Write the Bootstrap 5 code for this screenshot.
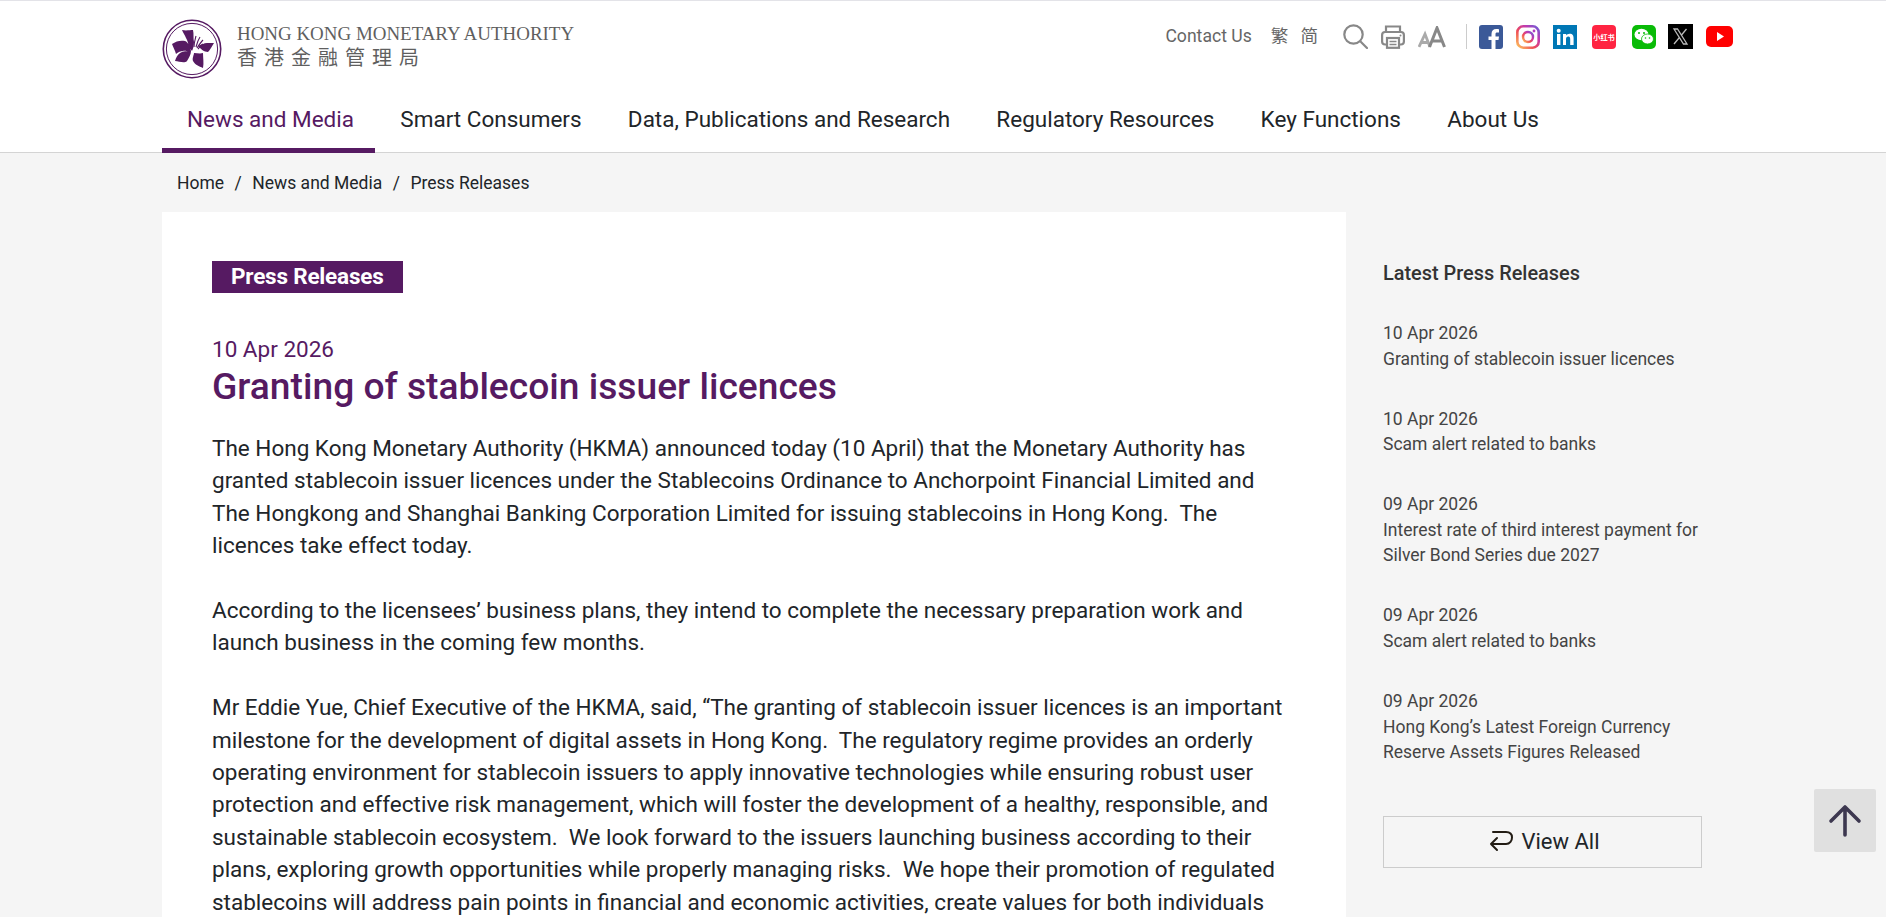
<!DOCTYPE html>
<html lang="en">
<head>
<meta charset="utf-8">
<title>Granting of stablecoin issuer licences</title>
<link href="https://cdn.jsdelivr.net/npm/bootstrap@5.3.0/dist/css/bootstrap.min.css" rel="stylesheet">
<style>
html,body{height:100%;overflow:hidden}
body{font-family:Roboto,"Noto Sans CJK TC",sans-serif;background:#f5f5f5;color:#212529}
.hk-header{background:#fff;border-top:1px solid #e3e3e8;border-bottom:1px solid #d4d4d4;height:153px}
.hk-wrap{width:1571px;margin-left:162px}
.hk-top{height:88px}
.hk-logo{margin-top:18px}
.hk-logotext{margin-left:15px;color:#5f5f5f}
.hk-en{font-family:"Liberation Serif",serif;font-size:18.95px;line-height:20px;white-space:nowrap;margin-top:23px}
.hk-zh{font-family:"Noto Sans CJK TC",serif;font-size:20px;line-height:24px;letter-spacing:7px;margin-top:1px}
.hk-tools{margin-top:23px;color:#666;font-size:17.6px;height:25px}
.hk-tools span{line-height:25px}
.hk-sep{width:1px;height:25px;background:#ccc;margin-left:20px}
.hk-g12{margin-left:12px}
.hk-g13{margin-left:13px}
.hk-g15{margin-left:15px}
.hk-g16{margin-left:16px}
.hk-g19{margin-left:19px}
.hk-g25{margin-left:25px}
.hk-navlink{display:block;font-size:22.5px;line-height:30px;color:#212529;text-decoration:none;padding:15px 21.3px 15px 25px;height:64px;white-space:nowrap}
.hk-navlink.hk-on{color:#561a62;border-bottom:5px solid #561a62}
.hk-crumb{height:59px;padding-left:15px;font-size:17.5px;line-height:60px;color:#212529}
.hk-crumb i{font-style:normal;margin:0 10.5px}
.hk-main{width:1184px;background:#fff;padding:49px 50px 0;flex:none}
.hk-tag{display:inline-block;background:#561a62;color:#fff;font-size:22.5px;font-weight:700;line-height:30px;height:32px;padding:0 19px;letter-spacing:-.2px}
.hk-date{font-size:22.5px;line-height:28px;color:#561a62;margin-top:42px}
.hk-title{font-size:37.2px;line-height:46px;font-weight:500;color:#561a62;margin:0 0 23px}
.hk-body{font-size:22.5px;line-height:32.4px;color:#212529;margin-bottom:32.4px;width:1078px}
.hk-side{margin-left:37px;width:319px;flex:none;color:#444;font-size:17.5px;line-height:25.5px}
.hk-sidetitle{font-size:19.9px;font-weight:500;color:#333;line-height:28px;margin:48.2px 0 0}
.hk-item{margin-top:34.6px}
.hk-sidetitle + .hk-item{margin-top:33px}
.hk-viewall{height:52px;border:1px solid #ccc;border-radius:0;margin-top:50px;padding-left:16px;font-size:22px;color:#212529;background:transparent}
.hk-up{position:fixed;left:1814px;top:789px;width:62px;height:63px;background:#e0e0e0;border-radius:2px}
</style>
</head>
<body>
<header class="hk-header">
  <div class="hk-wrap">
    <div class="d-flex justify-content-between hk-top">
      <div class="d-flex">
        <svg class="hk-logo" width="60" height="60" viewBox="0 0 60 60">
          <circle cx="30" cy="30" r="28.7" fill="none" stroke="#561a62" stroke-width="1.6"/>
          <circle cx="30" cy="30" r="25.6" fill="none" stroke="#561a62" stroke-width="1"/>
          <path fill="#561a62" d="M20 11c4 1 8 0 11 0 1 4 0 8 1 12 0 4-1 7-2 9-4-5-4-10-6-13-1-3-3-5-4-8zM10 25c4-3 9-4 13-3 3 1 5 6 6 10-3 1-6-1-8 0-2 0-5 1-7 3-1-4-3-7-4-10zM13 42c1-3 2-6 5-8 3-2 7-2 11-2 0 3-2 7-4 10-3 3-8 0-12 0zM32 34c3 0 6 1 9 0 0 5 1 10 0 15-4-2-8-3-10-7-1-3 1-6 1-8zM36 27c3-1 6-3 9-3l7 0c-2 3-4 7-6 9-4 0-7-3-10-6z"/>
          <path fill="none" stroke="#561a62" stroke-width="1.100" d="M32 28c0-4 1-7 2-11M34 28c1-4 2-7 4-10M35 29c2-3 4-6 6-8M36 30c2-2 3-4 5-5"/>
        </svg>
        <div class="hk-logotext">
          <div class="hk-en">HONG KONG MONETARY AUTHORITY</div>
          <div class="hk-zh">香港金融管理局</div>
        </div>
      </div>
      <div class="d-flex align-items-center hk-tools">
        <span>Contact Us</span>
        <span class="hk-g19">繁</span>
        <span class="hk-g12">简</span>
        <svg class="hk-g25" width="25" height="25" viewBox="0 0 25 25" fill="none" stroke="#888" stroke-width="2.2"><circle cx="10.500" cy="10.500" r="9.200"/><path d="M17.500 17.500l6.500 6.500" stroke-linecap="round"/></svg>
        <svg class="hk-g13" width="24" height="24" viewBox="0 0 24 24" fill="none" stroke="#888" stroke-width="2.200"><path d="M5 7V1.500h14V7"/><rect x="1.100" y="7" width="21.800" height="12.500" rx="3"/><rect x="6" y="13" width="12" height="9.800" fill="#fff"/><path d="M8.500 16.500h7M8.500 19.500h7" stroke-width="1.500"/><circle cx="19.500" cy="10.500" r="1" fill="#888" stroke="none"/></svg>
        <svg class="hk-g13" width="28" height="22" viewBox="0 0 28 22" fill="none"><path d="M1 21L7 8l5 13M3 16.500h7.500" stroke="#aaa" stroke-width="2.800"/><path d="M11.500 21L19 2l7.500 19M14.500 15h9" stroke="#888" stroke-width="3"/></svg>
        <div class="hk-sep"></div>
        <svg class="hk-g12" width="24" height="24" viewBox="0 0 24 24"><rect width="24" height="24" rx="3" fill="#3b5998"/><path fill="#fff" d="M16.500 24v-9h3l.5-3.600h-3.500V9.200c0-1 .3-1.700 1.800-1.700H20V4.300c-.4-.1-1.500-.2-2.800-.2-2.800 0-4.700 1.700-4.700 4.800v2.500H9.500V15h3v9z"/></svg>
        <svg class="hk-g13" width="24" height="24" viewBox="0 0 24 24" fill="none"><defs><linearGradient id="ig" x1="0" y1="1" x2="1" y2="0"><stop offset="0" stop-color="#fdc35c"/><stop offset=".4" stop-color="#ee4a5a"/><stop offset=".7" stop-color="#c13ab0"/><stop offset="1" stop-color="#6a5fd8"/></linearGradient></defs><rect x="1.300" y="1.300" width="21.400" height="21.400" rx="6" stroke="url(#ig)" stroke-width="2.600"/><circle cx="12" cy="12" r="5" stroke="url(#ig)" stroke-width="2.400"/><circle cx="18" cy="6" r="1.400" fill="#b13ac0"/></svg>
        <svg class="hk-g13" width="24" height="24" viewBox="0 0 24 24"><rect width="24" height="24" fill="#0077b5"/><rect x="4" y="9" width="3.400" height="11" fill="#fff"/><circle cx="5.700" cy="5.700" r="2" fill="#fff"/><path fill="#fff" d="M10 9h3.200v1.500c.6-1 1.800-1.800 3.500-1.800 3 0 3.900 2 3.900 4.800V20h-3.400v-5.800c0-1.500-.4-2.700-1.900-2.700s-2.300 1.100-2.300 2.700V20H10z"/></svg>
        <svg class="hk-g15" width="24" height="24" viewBox="0 0 24 24"><rect width="24" height="24" rx="4" fill="#ff2442"/><text x="12" y="15" text-anchor="middle" font-size="7.200" font-weight="700" fill="#fff" font-family="'Noto Sans CJK SC',sans-serif">小红书</text></svg>
        <svg class="hk-g16" width="24" height="24" viewBox="0 0 24 24"><rect width="24" height="24" rx="5" fill="#09bb07"/><ellipse cx="9.500" cy="9.500" rx="7" ry="5.800" fill="#fff"/><ellipse cx="15.500" cy="14" rx="6" ry="5" fill="#fff" stroke="#09bb07" stroke-width=".8"/><circle cx="7" cy="8" r="1" fill="#09bb07"/><circle cx="12" cy="8" r="1" fill="#09bb07"/><circle cx="13.500" cy="13" r=".8" fill="#09bb07"/><circle cx="17.500" cy="13" r=".8" fill="#09bb07"/></svg>
        <svg class="hk-g12" width="25" height="25" viewBox="0 0 25 25"><rect width="25" height="25" fill="#000"/><path fill="none" stroke="#bbb" stroke-width="1.300" d="M6 5h3.500l9.500 15h-3.500zM18.500 5L13.500 11M11 14l-5 6"/></svg>
        <svg class="hk-g13" width="27" height="21" viewBox="0 0 27 21"><rect width="27" height="21" rx="5" fill="#f00"/><path fill="#fff" d="M11 6l7 4.500-7 4.500z"/></svg>
      </div>
    </div>
    <nav class="d-flex">
      <a class="hk-navlink hk-on" href="#">News and Media</a>
      <a class="hk-navlink" href="#">Smart Consumers</a>
      <a class="hk-navlink" href="#">Data, Publications and Research</a>
      <a class="hk-navlink" href="#">Regulatory Resources</a>
      <a class="hk-navlink" href="#">Key Functions</a>
      <a class="hk-navlink" href="#">About Us</a>
    </nav>
  </div>
</header>
<div class="hk-wrap">
  <div class="hk-crumb">Home<i>/</i>News and Media<i>/</i>Press Releases</div>
  <div class="d-flex">
    <main class="hk-main">
      <div class="hk-tag">Press Releases</div>
      <div class="hk-date">10 Apr 2026</div>
      <h1 class="hk-title">Granting of stablecoin issuer licences</h1>
      <p class="hk-body">The Hong Kong Monetary Authority (HKMA) announced today (10 April) that the Monetary Authority has granted stablecoin issuer licences under the Stablecoins Ordinance to Anchorpoint Financial Limited and The Hongkong and Shanghai Banking Corporation Limited for issuing stablecoins in Hong Kong.&nbsp; The licences take effect today.</p>
      <p class="hk-body">According to the licensees’ business plans, they intend to complete the necessary preparation work and launch business in the coming few months.</p>
      <p class="hk-body">Mr Eddie Yue, Chief Executive of the HKMA, said, “The granting of stablecoin issuer licences is an important milestone for the development of digital assets in Hong Kong.&nbsp; The regulatory regime provides an orderly operating environment for stablecoin issuers to apply innovative technologies while ensuring robust user protection and effective risk management, which will foster the development of a healthy, responsible, and sustainable stablecoin ecosystem.&nbsp; We look forward to the issuers launching business according to their plans, exploring growth opportunities while properly managing risks.&nbsp; We hope their promotion of regulated stablecoins will address pain points in financial and economic activities, create values for both individuals</p>
    </main>
    <aside class="hk-side">
      <h2 class="hk-sidetitle">Latest Press Releases</h2>
      <div class="hk-item"><div>10 Apr 2026</div><div>Granting of stablecoin issuer licences</div></div>
      <div class="hk-item"><div>10 Apr 2026</div><div>Scam alert related to banks</div></div>
      <div class="hk-item"><div>09 Apr 2026</div><div>Interest rate of third interest payment for Silver Bond Series due 2027</div></div>
      <div class="hk-item"><div>09 Apr 2026</div><div>Scam alert related to banks</div></div>
      <div class="hk-item"><div>09 Apr 2026</div><div>Hong Kong’s Latest Foreign Currency Reserve Assets Figures Released</div></div>
      <a href="#" class="btn hk-viewall d-flex align-items-center justify-content-center gap-2">
        <svg width="24" height="24" viewBox="0 0 24 24" fill="none" stroke="#221c14" stroke-width="2" stroke-linecap="round" stroke-linejoin="round"><path d="M4 2h13c4 0 6 2.500 6 5.500S21 14 17 14H2M8 8l-6 6 6 6"/></svg>
        View All
      </a>
    </aside>
  </div>
</div>
<a href="#" class="hk-up d-flex align-items-center justify-content-center" aria-label="Back to top">
  <svg width="34" height="34" viewBox="0 0 34 34" fill="none" stroke="#3d3850" stroke-width="3.600" stroke-linecap="round" stroke-linejoin="round"><path d="M17 31V3M3 17L17 3l14 14"/></svg>
</a>
<script src="https://cdn.jsdelivr.net/npm/bootstrap@5.3.0/dist/js/bootstrap.bundle.min.js"></script>
</body>
</html>
